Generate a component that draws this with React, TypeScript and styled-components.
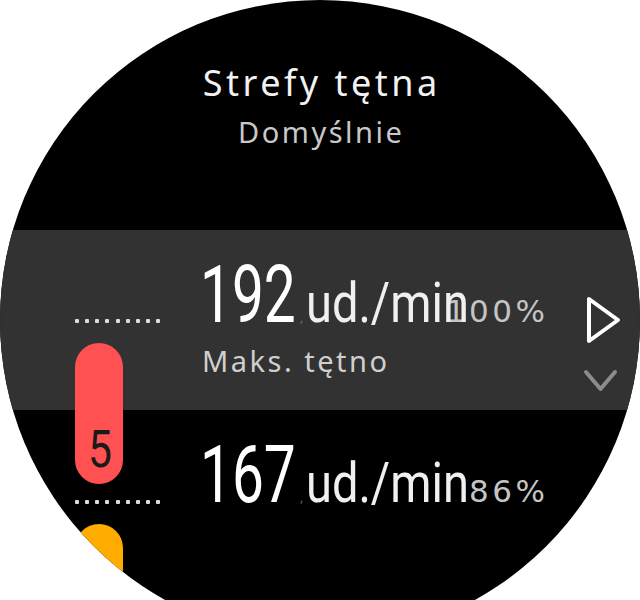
import React from 'react';
import styled, { createGlobalStyle } from 'styled-components';

const GlobalStyle = createGlobalStyle`
  html, body { margin: 0; padding: 0; background: #fff; }
  body { width: 640px; height: 600px; overflow: hidden; font-family: "Noto Sans", sans-serif; }
`;

const Viewport = styled.div`
  width: 640px;
  height: 600px;
  overflow: hidden;
  background: #fff;
`;

const Face = styled.div`
  width: 640px;
  height: 640px;
  border-radius: 50%;
  background: #000;
  overflow: hidden;
  display: flex;
  flex-direction: column;
`;

const Header = styled.header`
  height: 230px;
  flex: none;
  box-sizing: border-box;
  padding-top: 65px;
  display: flex;
  flex-direction: column;
  align-items: center;
  gap: 16px;
`;

const Title = styled.div`
  font-family: "Noto Sans", sans-serif;
  font-size: 36px;
  line-height: 36px;
  letter-spacing: 3.5px;
  margin-right: -3.5px;
  color: #f2f2f2;
`;

const Subtitle = styled.div`
  font-family: "Noto Sans", sans-serif;
  font-size: 29px;
  line-height: 30px;
  letter-spacing: 2.5px;
  margin-right: -2.5px;
  color: #c8c8c8;
`;

const List = styled.div`
  display: grid;
  flex: 1;
`;

const Rows = styled.div`
  grid-area: 1 / 1;
  display: flex;
  flex-direction: column;
`;

const Row = styled.div<{ $active?: boolean }>`
  height: 180px;
  flex: none;
  box-sizing: border-box;
  background: ${(p) => (p.$active ? '#323232' : 'transparent')};
  display: flex;
  padding: 25px 20px 0 202px;
  gap: 38px;
`;

const TextBlock = styled.div`
  flex: 1;
  min-width: 0;
  display: flex;
  flex-direction: column;
  gap: 11px;
`;

const ValueLine = styled.div`
  display: grid;
  grid-template-columns: minmax(0, 1fr);
  align-items: baseline;
`;

const Reading = styled.div`
  grid-area: 1 / 1;
  display: flex;
  align-items: baseline;
  white-space: nowrap;
`;

const Squeezed = styled.span<{ $scale: number }>`
  display: inline-block;
  transform: scaleX(${(p) => p.$scale});
  transform-origin: 0 50%;
`;

const Num = styled.span`
  display: inline-block;
  width: 96px;
  margin-left: -2px;
  font-family: Roboto, sans-serif;
  font-size: 80px;
  line-height: 80px;
  color: #fff;
  white-space: nowrap;
`;

const Sep = styled.span`
  font-family: "Noto Sans", sans-serif;
  font-size: 12px;
  line-height: 12px;
  color: #6a6a6a;
  margin: 0 3px 0 4px;
`;

const Unit = styled.span`
  display: inline-block;
  width: 163px;
  font-family: Roboto, sans-serif;
  font-size: 56px;
  line-height: 56px;
  color: #f0f0f0;
  white-space: nowrap;
`;

const Pct = styled.span`
  grid-area: 1 / 1;
  justify-self: end;
  font-family: "DejaVu Sans", sans-serif;
  font-size: 31px;
  line-height: 30px;
  letter-spacing: 3.5px;
  margin-right: -3.5px;
  color: #c4c4c4;
`;

const Label = styled.div`
  font-family: "Noto Sans", sans-serif;
  font-size: 29px;
  line-height: 29px;
  letter-spacing: 2.5px;
  color: #cfcfcf;
`;

const Nav = styled.div`
  width: 37px;
  flex: none;
  display: flex;
  flex-direction: column;
  padding-top: 41px;
  gap: 23px;
  svg { display: block; overflow: visible; }
`;

const Scale = styled.div`
  grid-area: 1 / 1;
  align-self: start;
  justify-self: start;
  margin-left: 75px;
  padding-top: 89px;
  width: 85px;
  display: flex;
  flex-direction: column;
`;

const Dots = styled.div`
  display: flex;
  justify-content: space-between;
  height: 4px;
  span {
    width: 4px;
    height: 4px;
    border-radius: 1px;
    background: #dcdcdc;
  }
`;

const Pill = styled.div<{ $color: string }>`
  width: 48px;
  height: 141px;
  margin: 20px 0 16px;
  border-radius: 24px;
  background: ${(p) => p.$color};
  box-sizing: border-box;
  padding-bottom: 8px;
  display: flex;
  align-items: flex-end;
  justify-content: center;
`;

const ZoneNo = styled.span`
  display: inline-block;
  width: 22px;
  font-family: Roboto, sans-serif;
  font-size: 52px;
  line-height: 52px;
  color: #1a1a1a;
  white-space: nowrap;
`;

const DotRow = () => (
  <Dots>
    {Array.from({ length: 9 }).map((_, i) => (
      <span key={i} />
    ))}
  </Dots>
);

const PlayIcon = () => (
  <svg width="37" height="48" viewBox="0 0 37 48">
    <path d="M6 3 L6 45 L35 24 Z" fill="none" stroke="#fff" strokeWidth="4" strokeLinejoin="round" />
  </svg>
);

const ChevronDown = () => (
  <svg width="37" height="27" viewBox="0 0 37 27">
    <path d="M3 5 L17.5 22 L32 5" fill="none" stroke="#8c8c8c" strokeWidth="4" strokeLinecap="round" strokeLinejoin="round" />
  </svg>
);

const Value = ({ bpm, pct }: { bpm: string; pct: string }) => (
  <ValueLine>
    <Reading>
      <Num>
        <Squeezed $scale={0.71}>{bpm}</Squeezed>
      </Num>
      <Sep>,</Sep>
      <Unit>
        <Squeezed $scale={0.84}>ud./min</Squeezed>
      </Unit>
    </Reading>
    <Pct>{pct}</Pct>
  </ValueLine>
);

export default function App() {
  return (
    <>
      <GlobalStyle />
      <Viewport>
        <Face>
          <Header>
            <Title>Strefy tętna</Title>
            <Subtitle>Domyślnie</Subtitle>
          </Header>
          <List>
            <Rows>
              <Row $active>
                <TextBlock>
                  <Value bpm="192" pct="100%" />
                  <Label>Maks. tętno</Label>
                </TextBlock>
                <Nav>
                  <PlayIcon />
                  <ChevronDown />
                </Nav>
              </Row>
              <Row>
                <TextBlock>
                  <Value bpm="167" pct="86%" />
                </TextBlock>
                <Nav />
              </Row>
            </Rows>
            <Scale>
              <DotRow />
              <Pill $color="#ff5151">
                <ZoneNo>
                  <Squeezed $scale={0.82}>5</Squeezed>
                </ZoneNo>
              </Pill>
              <DotRow />
              <Pill $color="#ffab00">
                <ZoneNo>
                  <Squeezed $scale={0.82}>4</Squeezed>
                </ZoneNo>
              </Pill>
            </Scale>
          </List>
        </Face>
      </Viewport>
    </>
  );
}
